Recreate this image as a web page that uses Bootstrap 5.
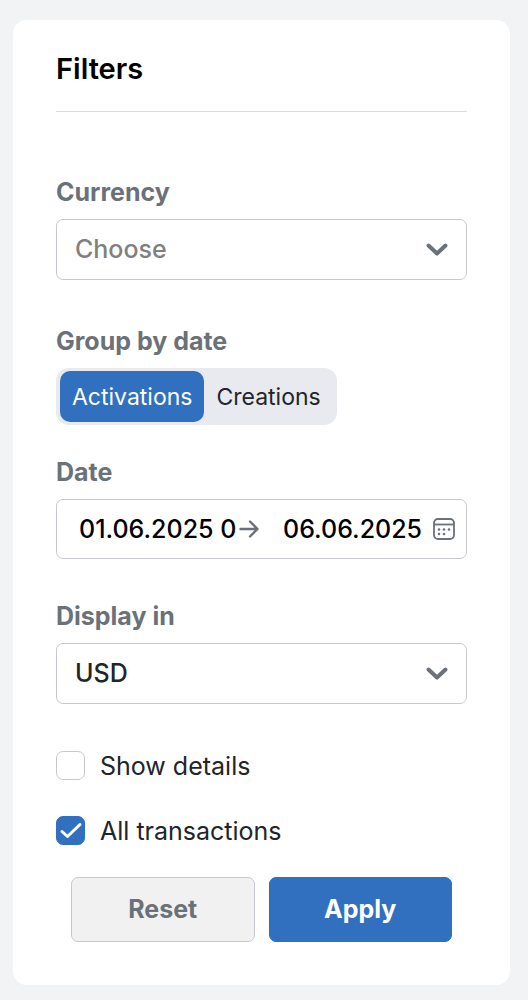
<!DOCTYPE html>
<html lang="en">
<head>
<meta charset="utf-8">
<meta name="viewport" content="width=device-width, initial-scale=1">
<title>Filters</title>
<link href="https://cdn.jsdelivr.net/npm/bootstrap@5.3.0/dist/css/bootstrap.min.css" rel="stylesheet">
<style>
  :root { --accent: #3070be; --muted: #6b7178; --line: #c6c9d0; --ink: #212529; }
  body { background: #f1f3f5; font-family: Inter, "Liberation Sans", sans-serif; font-size: 25px; line-height: 32px; color: var(--ink); }
  .page { padding: 20px 18px 15px 13px; }
  .panel { border: 0; border-radius: 14px; padding: 33px 43px 43px; }
  .panel-title { font-size: 29px; line-height: 32px; font-weight: 600; color: #000; padding-bottom: 26px; margin-bottom: 64px; border-bottom: 1px solid #dcdde0; }
  .field-label { display: block; width: fit-content; font-weight: 700; font-size: 25px; line-height: 32px; color: var(--muted); margin: 0 0 11px; padding: 0; float: none; }
  .field-box { border: 1px solid var(--line); border-radius: 7px; background-color: #fff; }
  .form-select.field-box { height: 61px; padding: 0 60px 2px 18px; font-size: 25px; font-weight: 500; line-height: 32px; color: var(--ink);
    background-image: url("data:image/svg+xml,%3Csvg xmlns='http://www.w3.org/2000/svg' viewBox='0 0 22 14'%3E%3Cpath d='M2.5 2.5 11 10.5 19.5 2.5' fill='none' stroke='%236b7178' stroke-width='4' stroke-linecap='round' stroke-linejoin='round'/%3E%3C/svg%3E");
    background-size: 22px 14px; background-position: right 18px center; }
  .form-select.unset { color: #808080; }
  .segments { background: #e9eaef; border-radius: 13px; padding: 3px 4px; width: fit-content; }
  .segments label { border-radius: 10px; padding: 10px 12px 9px; font-size: 23px; line-height: 32px; cursor: pointer; }
  .segments .btn-check:checked + label { background: var(--accent); color: #fff; }
  .date-range { height: 60px; padding: 0 11px 0 22px; }
  .date-range input { border: 0; padding: 0; min-width: 0; background: none; outline: 0; font-size: 25px; font-weight: 500; line-height: 32px; color: #000; }
  .date-range .from { flex: 160 1 0; }
  .date-range .to { flex: 150 1 0; margin-left: 23px; }
  .tick { min-height: 32px; gap: 15px; }
  .tick label { padding-top: 2px; line-height: 30px; }
  .tick .form-check-input { width: 29px; height: 29px; margin: 0; border: 1px solid var(--line); border-radius: 7px; flex: none; }
  .tick .form-check-input:checked { background-color: var(--accent); border-color: var(--accent);
    background-size: 29px 29px; background-image: url("data:image/svg+xml,%3Csvg xmlns='http://www.w3.org/2000/svg' viewBox='0 0 29 29'%3E%3Cpath d='M6 15.5 11.5 20.5 24 8.5' fill='none' stroke='%23fff' stroke-width='3' stroke-linecap='round' stroke-linejoin='round'/%3E%3C/svg%3E"); }
  .actions { padding: 0 15px; gap: 14px; }
  .actions .btn { height: 65px; border-radius: 7px; padding: 0 12px 2px; font-size: 25px; font-weight: 700; line-height: 32px; flex: 1 1 0; }
  .btn-reset { background: #f1f1f1; border-color: var(--line); color: var(--muted); }
  .btn-apply { background: var(--accent); border-color: var(--accent); color: #fff; }
  .gap-a { margin-bottom: 45px; } .gap-b { margin-bottom: 31px; } .gap-c { margin-bottom: 41px; } .gap-d { margin-bottom: 33px; }
</style>
</head>
<body>
<main class="page">
  <form class="card panel">
    <h1 class="panel-title">Filters</h1>

    <div class="gap-a">
      <label class="field-label" for="currency">Currency</label>
      <select class="form-select field-box unset" id="currency"><option selected>Choose</option></select>
    </div>

    <fieldset class="gap-b">
      <legend class="field-label">Group by date</legend>
      <div class="segments d-flex">
        <input class="btn-check" type="radio" name="group" id="activations" checked>
        <label for="activations">Activations</label>
        <input class="btn-check" type="radio" name="group" id="creations">
        <label for="creations">Creations</label>
      </div>
    </fieldset>

    <div class="gap-c">
      <label class="field-label" for="from">Date</label>
      <div class="field-box date-range d-flex align-items-center">
        <input class="from" id="from" type="text" value="01.06.2025 0">
        <svg width="21" height="20" viewBox="0 0 21 20" fill="none" stroke="#6b7178" stroke-width="2.4" stroke-linecap="round" stroke-linejoin="round" aria-hidden="true"><path d="M1.5 10H18.5M11 2.5 18.5 10 11 17.5"/></svg>
        <input class="to" type="text" value="06.06.2025" aria-label="End date">
        <svg width="22" height="22" viewBox="0 0 22 22" fill="none" stroke="#6b7178" stroke-width="1.8" aria-hidden="true"><rect x="1" y="1" width="20" height="20" rx="4"/><path d="M1 6.5H21"/><g fill="#6b7178" stroke="none"><circle cx="6" cy="11.5" r="1.3"/><circle cx="11" cy="11.5" r="1.3"/><circle cx="16" cy="11.5" r="1.3"/><circle cx="6" cy="16" r="1.3"/><circle cx="11" cy="16" r="1.3"/></g></svg>
      </div>
    </div>

    <div class="gap-a">
      <label class="field-label" for="display">Display in</label>
      <select class="form-select field-box" id="display"><option selected>USD</option></select>
    </div>

    <div class="tick d-flex align-items-center gap-d">
      <input class="form-check-input" type="checkbox" id="details">
      <label for="details">Show details</label>
    </div>
    <div class="tick d-flex align-items-center gap-b">
      <input class="form-check-input" type="checkbox" id="all" checked>
      <label for="all">All transactions</label>
    </div>

    <div class="actions d-flex">
      <button class="btn btn-reset" type="reset">Reset</button>
      <button class="btn btn-apply" type="submit">Apply</button>
    </div>
  </form>
</main>
<script src="https://cdn.jsdelivr.net/npm/bootstrap@5.3.0/dist/js/bootstrap.bundle.min.js"></script>
</body>
</html>
